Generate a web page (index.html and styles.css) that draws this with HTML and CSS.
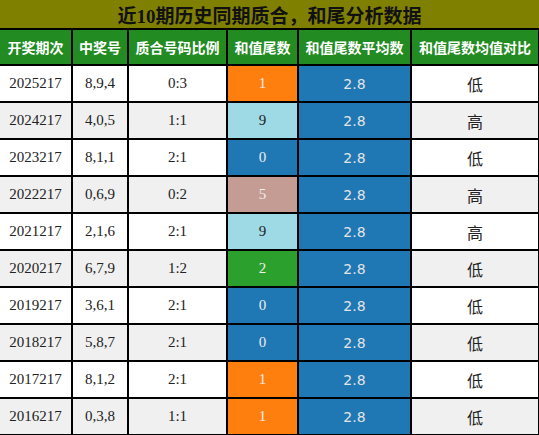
FILE: index.html
```html
<!DOCTYPE html>
<html lang="zh">
<head>
<meta charset="utf-8">
<link rel="stylesheet" href="styles.css">
</head>
<body>
<table class="tbl">
  <colgroup>
    <col class="c1"><col class="c2"><col class="c3"><col class="c4"><col class="c5"><col class="c6">
  </colgroup>
  <thead>
    <tr class="title-row"><th colspan="6">近10期历史同期质合，和尾分析数据</th></tr>
    <tr class="head-row">
      <th>开奖期次</th><th>中奖号</th><th>质合号码比例</th><th>和值尾数</th><th>和值尾数平均数</th><th>和值尾数均值对比</th>
    </tr>
  </thead>
  <tbody>
    <tr class="odd"><td>2025217</td><td>8,9,4</td><td>0:3</td><td class="v orange">1</td><td class="avg">2.8</td><td class="cmp">低</td></tr>
    <tr class="even"><td>2024217</td><td>4,0,5</td><td>1:1</td><td class="v light">9</td><td class="avg">2.8</td><td class="cmp">高</td></tr>
    <tr class="odd"><td>2023217</td><td>8,1,1</td><td>2:1</td><td class="v blue">0</td><td class="avg">2.8</td><td class="cmp">低</td></tr>
    <tr class="even"><td>2022217</td><td>0,6,9</td><td>0:2</td><td class="v rose">5</td><td class="avg">2.8</td><td class="cmp">高</td></tr>
    <tr class="odd"><td>2021217</td><td>2,1,6</td><td>2:1</td><td class="v light">9</td><td class="avg">2.8</td><td class="cmp">高</td></tr>
    <tr class="even"><td>2020217</td><td>6,7,9</td><td>1:2</td><td class="v green">2</td><td class="avg">2.8</td><td class="cmp">低</td></tr>
    <tr class="odd"><td>2019217</td><td>3,6,1</td><td>2:1</td><td class="v blue">0</td><td class="avg">2.8</td><td class="cmp">低</td></tr>
    <tr class="even"><td>2018217</td><td>5,8,7</td><td>2:1</td><td class="v blue">0</td><td class="avg">2.8</td><td class="cmp">低</td></tr>
    <tr class="odd"><td>2017217</td><td>8,1,2</td><td>2:1</td><td class="v orange">1</td><td class="avg">2.8</td><td class="cmp">低</td></tr>
    <tr class="even"><td>2016217</td><td>0,3,8</td><td>1:1</td><td class="v orange">1</td><td class="avg">2.8</td><td class="cmp">低</td></tr>
  </tbody>
</table>
</body>
</html>
```
FILE: styles.css
```css
html, body {
  margin: 0;
  padding: 0;
  background: #ffffff;
}
.tbl {
  width: 539px;
  border-collapse: collapse;
  table-layout: fixed;
  font-family: "Liberation Serif", "Noto Sans CJK SC", serif;
  font-size: 15px;
  color: #222;
}
.c1 { width: 72px; }
.c2 { width: 56px; }
.c3 { width: 99px; }
.c4 { width: 71px; }
.c5 { width: 113px; }
.c6 { width: 128px; }
.tbl th, .tbl td {
  border: 2px solid #000;
  text-align: center;
  padding: 0;
}
.title-row th {
  background: #808000;
  color: #111;
  height: 28px;
  font-family: "Liberation Serif", "Noto Sans CJK SC", serif;
  font-size: 19px;
  font-weight: bold;
  border-top: none;
  border-left: none;
  border-right: none;
}
.head-row th {
  background: #228b22;
  color: #fff;
  height: 34px;
  font-family: "Noto Sans CJK SC", sans-serif;
  font-size: 14px;
  font-weight: bold;
}
.tbl td {
  height: 35px;
}
.odd td { background: #ffffff; }
.even td { background: #f0f0f0; }
.tbl td.v {
  color: #eeeeee;
  font-size: 15px;
}
.tbl td.orange { background: #ff7f0e; }
.tbl td.light { background: #9edae5; color: #222; }
.tbl td.blue { background: #1f77b4; }
.tbl td.rose { background: #c49c94; }
.tbl td.green { background: #2ca02c; }
.tbl td.avg {
  background: #1f77b4;
  color: #e4e4e4;
  font-family: "DejaVu Sans", sans-serif;
  font-size: 14px;
}
.tbl td.cmp {
  font-family: "Noto Sans CJK SC", sans-serif;
  font-size: 16px;
}
.tbl tr > :first-child { border-left: none; }
```
